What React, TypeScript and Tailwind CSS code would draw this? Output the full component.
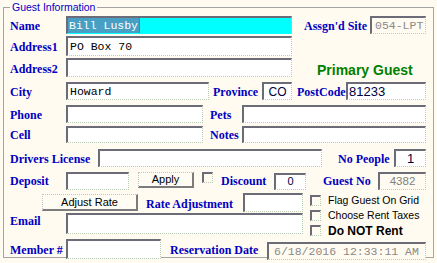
import type { ReactNode } from "react";

const lbl =
  "font-['Liberation_Serif',serif] font-bold text-[12px] leading-none text-[#0000c0] whitespace-nowrap";
const box =
  "flex items-center overflow-hidden border-t-2 border-l-2 border-r border-b [border-style:solid_dotted_dotted_solid] [border-color:#6c6c78_#b9ccb4_#b9ccb4_#6c6c78]";
const mono = "font-['Liberation_Mono',monospace] text-[11.5px] leading-none";
const sans = "font-['Liberation_Sans',Arial,sans-serif]";
const btn =
  "flex items-center justify-center bg-[#fffcf4] border-t border-l border-r-2 border-b-2 [border-style:dotted_solid_solid_dotted] [border-color:#c4c4c4_#7c7c7c_#7c7c7c_#c4c4c4] font-['Liberation_Sans',Arial,sans-serif] text-[11px] leading-none text-black";

function Box({ className, children }: { className: string; children?: ReactNode }) {
  return <div className={`${box} ${className}`}>{children}</div>;
}

function Check({ label, bold }: { label: string; bold?: boolean }) {
  return (
    <div className="flex items-center h-[15px]">
      <div className={`${box} w-[11px] h-[11px] bg-[#fffbf0]`} />
      <span
        className={`${sans} ml-[7px] leading-none text-black whitespace-nowrap ${
          bold ? "font-bold text-[12px]" : "text-[10.5px]"
        }`}
      >
        {label}
      </span>
    </div>
  );
}

export default function App() {
  return (
    <div className="w-[437px] h-[263px] overflow-hidden bg-[#fffbf0]">
      <div className="relative ml-[3px] mt-[7px] w-[431px] h-[251px] border border-[#a4a4a4]">
        <span
          className={`${sans} absolute left-[6px] top-[-7px] px-[2px] bg-[#fffbf0] text-[10.5px] leading-[12px] text-[#0000c8]`}
        >
          Guest Information
        </span>

        <div className="pl-[6px] pt-[8px] pr-[6px]">
          {/* name */}
          <div className="flex items-center h-[18px]">
            <span className={`${lbl} w-[56px] pt-[2px]`}>Name</span>
            <Box className="w-[226px] h-[18px] bg-[#00ffff]">
              <span className="flex items-center h-full bg-[#47a0c4] pl-[1px] pr-[1px]">
                <span className={`${mono} text-white`}>Bill Lusby</span>
              </span>
              <span className="w-[1px] h-full bg-[#c0602a]" />
            </Box>
            <span className={`${lbl} w-[66px] ml-[12px] pt-[1px]`}>Assgn'd Site</span>
            <Box className="w-[56px] h-[18px] bg-[#fffbf0] pl-[3px]">
              <span className={`${mono} text-[#8a8a8a]`}>054-LPT</span>
            </Box>
          </div>

          {/* address */}
          <div className="flex items-center h-[20px] mt-[2px]">
            <span className={`${lbl} w-[56px] pt-[2px]`}>Address1</span>
            <Box className="w-[226px] h-[20px] bg-white pl-[2px]">
              <span className={`${mono} text-black`}>PO Box 70</span>
            </Box>
          </div>
          <div className="flex items-center h-[19px] mt-[2px]">
            <span className={`${lbl} w-[56px] pt-[2px]`}>Address2</span>
            <Box className="w-[226px] h-[19px] bg-white" />
            <span
              className={`${sans} ml-[25px] mt-[4px] font-bold text-[14px] leading-none text-[#008000] whitespace-nowrap`}
            >
              Primary Guest
            </span>
          </div>

          {/* city */}
          <div className="flex items-center h-[18px] mt-[5px]">
            <span className={`${lbl} w-[56px] pt-[2px]`}>City</span>
            <Box className="w-[143px] h-[18px] bg-white pl-[2px]">
              <span className={`${mono} text-black`}>Howard</span>
            </Box>
            <span className={`${lbl} w-[49px] ml-[4px] pt-[1px]`}>Province</span>
            <Box className="w-[30px] h-[18px] bg-white justify-center">
              <span className={`${sans} text-[12px] leading-none text-[#000040]`}>CO</span>
            </Box>
            <span className={`${lbl} w-[49px] ml-[5px] pt-[1px]`}>PostCode</span>
            <Box className="w-[80px] h-[18px] bg-white pl-[1px]">
              <span className={`${sans} text-[13px] leading-none text-[#000040]`}>81233</span>
            </Box>
          </div>

          {/* phone / pets */}
          <div className="flex items-center h-[18px] mt-[5px]">
            <span className={`${lbl} w-[56px] pt-[1px]`}>Phone</span>
            <Box className="w-[137px] h-[18px] bg-white" />
            <span className={`${lbl} w-[32px] ml-[7px] pt-[1px]`}>Pets</span>
            <Box className="w-[184px] h-[18px] bg-white" />
          </div>
          <div className="flex items-center h-[17px] mt-[3px]">
            <span className={`${lbl} w-[56px] pt-[1px]`}>Cell</span>
            <Box className="w-[137px] h-[17px] bg-white" />
            <span className={`${lbl} w-[32px] ml-[7px] pt-[1px]`}>Notes</span>
            <Box className="w-[184px] h-[17px] bg-white" />
          </div>

          {/* drivers license */}
          <div className="flex items-center h-[18px] mt-[6px]">
            <span className={`${lbl} w-[88px] pt-[1px]`}>Drivers License</span>
            <Box className="w-[224px] h-[18px] bg-white" />
            <span className={`${lbl} w-[56px] ml-[16px] pt-[1px]`}>No People</span>
            <Box className="w-[32px] h-[18px] bg-white justify-center">
              <span className={`${sans} text-[13px] leading-none text-[#000040]`}>1</span>
            </Box>
          </div>

          {/* deposit */}
          <div className="flex items-center h-[18px] mt-[5px]">
            <span className={`${lbl} w-[56px]`}>Deposit</span>
            <Box className="w-[63px] h-[18px] bg-white" />
            <div className={`${btn} w-[56px] h-[16px] ml-[9px] self-start`}>Apply</div>
            <div className={`${box} w-[11px] h-[11px] ml-[8px] self-start bg-[#fffbf0]`} />
            <span className={`${lbl} w-[53px] ml-[8px]`}>Discount</span>
            <Box className="w-[32px] h-[17px] bg-white justify-center">
              <span className={`${sans} text-[11px] leading-none text-[#000040]`}>0</span>
            </Box>
            <span className={`${lbl} w-[55px] ml-[17px]`}>Guest No</span>
            <Box className="w-[48px] h-[18px] bg-[#fffbf0] justify-center">
              <span className={`${sans} text-[11.5px] leading-none text-[#808080]`}>4382</span>
            </Box>
          </div>

          {/* rate block */}
          <div className="flex mt-[3px]">
            <div className="w-[293px]">
              <div className="flex items-center h-[19px]">
                <div className={`${btn} w-[96px] h-[17px] ml-[32px] self-start mt-[1px]`}>
                  Adjust Rate
                </div>
                <span className={`${lbl} w-[97px] ml-[8px] pt-[2px]`}>Rate Adjustment</span>
                <Box className="w-[60px] h-[19px] bg-white" />
              </div>
              <div className="flex items-center h-[21px] mt-[1px]">
                <span className={`${lbl} w-[56px] self-start mt-[2px]`}>Email</span>
                <Box className="w-[237px] h-[21px] bg-white" />
              </div>
            </div>
            <div className="ml-[7px] flex flex-col">
              <Check label="Flag Guest On Grid" />
              <Check label="Choose Rent Taxes" />
              <Check label="Do NOT Rent" bold />
            </div>
          </div>

          {/* member */}
          <div className="flex items-center h-[21px] mt-[1px]">
            <span className={`${lbl} w-[56px] pt-[1px]`}>Member #</span>
            <Box className="w-[95px] h-[20px] bg-white self-start" />
            <span className={`${lbl} w-[97px] ml-[9px] pt-[1px]`}>Reservation Date</span>
            <Box className="w-[159px] h-[18px] bg-[#fffbf0] pl-[5px] self-end">
              <span className={`${mono} text-[#8a8a8a]`}>6/18/2016 12:33:11 AM</span>
            </Box>
          </div>
        </div>
      </div>

      <div className="ml-[3px] pl-[7px] pt-[1px]">
        <span className={`${sans} text-[10.5px] leading-[12px] text-[#000060]`}>
          Vehicle Information
        </span>
      </div>
    </div>
  );
}
